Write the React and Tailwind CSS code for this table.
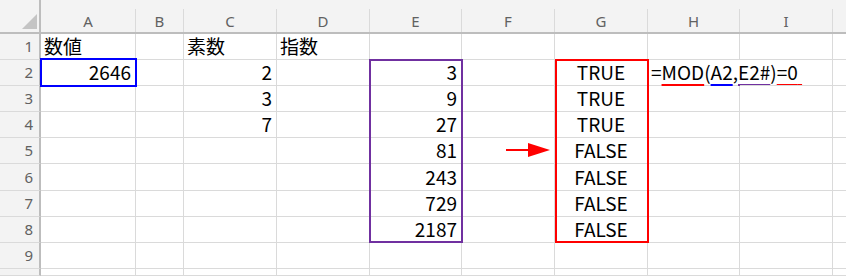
const COLS = ['A', 'B', 'C', 'D', 'E', 'F', 'G', 'H', 'I', '']

// cell contents keyed by column letter, one object per sheet row
const ROWS = [
  { A: ['数値', 'left'], C: ['素数', 'left'], D: ['指数', 'left'] },
  { A: ['2646', 'right'], C: ['2', 'right'], E: ['3', 'right'], G: ['TRUE', 'center'], H: ['formula', 'left'] },
  { C: ['3', 'right'], E: ['9', 'right'], G: ['TRUE', 'center'] },
  { C: ['7', 'right'], E: ['27', 'right'], G: ['TRUE', 'center'] },
  { E: ['81', 'right'], F: ['arrow', 'right'], G: ['FALSE', 'center'] },
  { E: ['243', 'right'], G: ['FALSE', 'center'] },
  { E: ['729', 'right'], G: ['FALSE', 'center'] },
  { E: ['2187', 'right'], G: ['FALSE', 'center'] },
  {},
  {},
]

const alignClass = {
  left: 'justify-start pl-[3px]',
  right: 'justify-end pr-[4px]',
  center: 'justify-center',
}

function Formula() {
  const line = 'underline decoration-2 [text-decoration-skip-ink:none] underline-offset-[4px]'
  return (
    <span>
      =
      <span className={`${line} [text-decoration-color:#ff0000]`}>MOD</span>
      (
      <span className={`${line} [text-decoration-color:#0000ff]`}>A2</span>
      ,
      <span className={`${line} [text-decoration-color:#7030a0]`}>E2#</span>
      )
      <span className={`${line} [text-decoration-color:#ff0000]`}>=0{'\u00a0'}</span>
    </span>
  )
}

function Arrow() {
  return (
    <svg width="44" height="14" viewBox="0 0 44 14" className="mb-[2px]">
      <line x1="0" y1="7" x2="24" y2="7" stroke="#ff0000" strokeWidth="2" />
      <polygon points="22,0 44,7 22,14" fill="#ff0000" />
    </svg>
  )
}

function Cell({ col, entry }) {
  const [value, align] = entry || ['', 'left']
  const last = col === ''
  // H2's text runs on into I2, so its right gridline is hidden
  const hideRight = last || value === 'formula'
  return (
    <div
      className={`flex items-center whitespace-nowrap overflow-visible border-b border-b-[#dadada] text-[19px] text-black ${
        hideRight ? '' : 'border-r border-r-[#dadada]'
      } ${alignClass[align]}`}
    >
      {value === 'formula' ? <Formula /> : value === 'arrow' ? <Arrow /> : value}
    </div>
  )
}

export default function App() {
  return (
    <div className="relative w-[846px] h-[276px] overflow-hidden bg-white font-['Noto_Sans_CJK_JP','Noto_Sans',sans-serif]">
      <div className="grid h-full grid-cols-[41px_95px_48px_93px_93px_92px_93px_93px_92px_93px_1fr] grid-rows-[34px_26px_26px_26px_26px_26px_27px_26px_26px_26px_1fr]">
        {/* corner */}
        <div className="flex items-end justify-end bg-[#f3f3f3] border-r-2 border-b-2 border-[#bdbdbd] pr-[2px] pb-[3px]">
          <svg width="15" height="15" viewBox="0 0 15 15">
            <polygon points="15,0 15,15 0,15" fill="#c4c4c4" />
          </svg>
        </div>

        {COLS.map((c) => (
          <div key={`h${c}`} className="bg-[#f3f3f3] border-b-2 border-[#bdbdbd] pt-[9px]">
            <div
              className={`h-full flex items-center justify-center pt-[2px] text-[15px] text-[#616161] font-['Noto_Sans',sans-serif] ${
                c ? 'border-r border-[#dadada]' : ''
              }`}
            >
              {c}
            </div>
          </div>
        ))}

        {ROWS.map((row, i) => [
          <div
            key={`r${i}`}
            className="flex items-center justify-end pr-[6px] bg-[#f3f3f3] border-r-2 border-r-[#bdbdbd] border-b border-b-[#dadada] text-[15px] text-[#616161] font-['Noto_Sans',sans-serif]"
          >
            {/* the tenth row is only a sliver at the bottom edge */}
            {i < 9 ? i + 1 : ''}
          </div>,
          ...COLS.map((c) => <Cell key={`${i}${c}`} col={c} entry={row[c]} />),
        ])}
      </div>

      {/* range outlines drawn over the grid */}
      <div className="absolute left-[40px] top-[58px] w-[97px] h-[29px] border-2 border-[#0000ff]" />
      <div className="absolute left-[369px] top-[59px] w-[94px] h-[184px] border-2 border-[#7030a0]" />
      <div className="absolute left-[555px] top-[59px] w-[94px] h-[184px] border-2 border-[#ff0000]" />
    </div>
  )
}
